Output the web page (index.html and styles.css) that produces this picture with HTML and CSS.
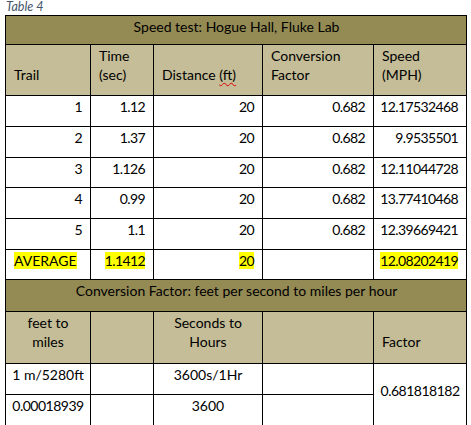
FILE: index.html
```html
<!DOCTYPE html>
<html>
<head>
<meta charset="utf-8">
<link rel="stylesheet" href="styles.css">
</head>
<body>
<div class="caption">Table 4</div>
<table class="grid">
  <colgroup>
    <col class="c1"><col class="c2"><col class="c3"><col class="c4"><col class="c5">
  </colgroup>
  <tr class="title-row"><td colspan="5">Speed test: Hogue Hall, Fluke Lab</td></tr>
  <tr class="head-row">
    <td>Trail</td>
    <td>Time<br>(sec)</td>
    <td>Distance <span class="spell">(ft)</span></td>
    <td class="top">Conversion<br>Factor</td>
    <td class="top">Speed<br>(MPH)</td>
  </tr>
  <tr class="data-row"><td class="num">1</td><td class="num">1.12</td><td class="num">20</td><td class="num">0.682</td><td class="num">12.17532468</td></tr>
  <tr class="data-row"><td class="num">2</td><td class="num">1.37</td><td class="num">20</td><td class="num">0.682</td><td class="num">9.9535501</td></tr>
  <tr class="data-row short"><td class="num">3</td><td class="num">1.126</td><td class="num">20</td><td class="num">0.682</td><td class="num">12.11044728</td></tr>
  <tr class="data-row"><td class="num">4</td><td class="num">0.99</td><td class="num">20</td><td class="num">0.682</td><td class="num">13.77410468</td></tr>
  <tr class="data-row"><td class="num">5</td><td class="num">1.1</td><td class="num">20</td><td class="num">0.682</td><td class="num">12.39669421</td></tr>
  <tr class="data-row short"><td><span class="hl">AVERAGE</span></td><td class="num"><span class="hl">1.1412</span></td><td class="num"><span class="hl">20</span></td><td></td><td class="num"><span class="hl">12.08202419</span></td></tr>
  <tr class="title-row tall"><td colspan="5">Conversion Factor: feet per second to miles per hour</td></tr>
  <tr class="head-row two">
    <td class="center">feet to<br>miles</td>
    <td></td>
    <td class="center">Seconds to<br>Hours</td>
    <td></td>
    <td>Factor</td>
  </tr>
  <tr class="data-row"><td class="center">1 m/5280ft</td><td></td><td class="center">3600s/1Hr</td><td></td><td class="center mid digits" rowspan="2">0.681818182</td></tr>
  <tr class="data-row"><td class="center digits">0.00018939</td><td></td><td class="center">3600</td><td></td></tr>
</table>
</body>
</html>
```

FILE: styles.css
```css
html, body {
  margin: 0;
  padding: 0;
  background: #ffffff;
}

body {
  font-family: Lato, "Open Sans", sans-serif;
  color: #000000;
}

.caption {
  font-family: Lato, sans-serif;
  font-style: italic;
  font-size: 12.5px;
  line-height: 14px;
  color: #44546a;
  padding: 0 0 0 6px;
  height: 15px;
}

.grid {
  border-collapse: collapse;
  table-layout: fixed;
  width: 462px;
  margin-left: 5px;
  font-size: 14px;
  line-height: 19px;
}

.c1 { width: 85px; }
.c2 { width: 63px; }
.c3 { width: 109px; }
.c4 { width: 111px; }
.c5 { width: 93px; }

.grid td {
  border: 1px solid #000000;
  padding: 1px 7px 0 8px;
  vertical-align: top;
  white-space: nowrap;
}

.title-row td {
  background: #948a54;
  text-align: center;
  height: 29px;
  box-sizing: border-box;
}

.title-row.tall td {
  height: 32px;
}

.head-row td {
  background: #c4bd97;
  height: 50px;
  box-sizing: border-box;
  vertical-align: bottom;
  padding-bottom: 11px;
}

.head-row td.top {
  vertical-align: top;
  padding-top: 1px;
}

.head-row.two td {
  height: 49px;
  padding-bottom: 12px;
}

.data-row td {
  height: 31px;
  box-sizing: border-box;
}

.data-row.short td {
  height: 30px;
}

.grid td.num {
  text-align: right;
  padding-left: 0;
  padding-right: 8px;
  letter-spacing: -0.6px;
}

.grid td.center {
  text-align: center;
  padding-left: 0;
  padding-right: 0;
}

.grid td.digits {
  letter-spacing: -0.5px;
}

.grid td.mid {
  vertical-align: middle;
  padding-bottom: 10px;
}

.hl {
  background: #ffff00;
}

.spell {
  text-decoration: underline wavy #e00000;
  text-decoration-thickness: 1px;
  text-underline-offset: 2px;
}
```
